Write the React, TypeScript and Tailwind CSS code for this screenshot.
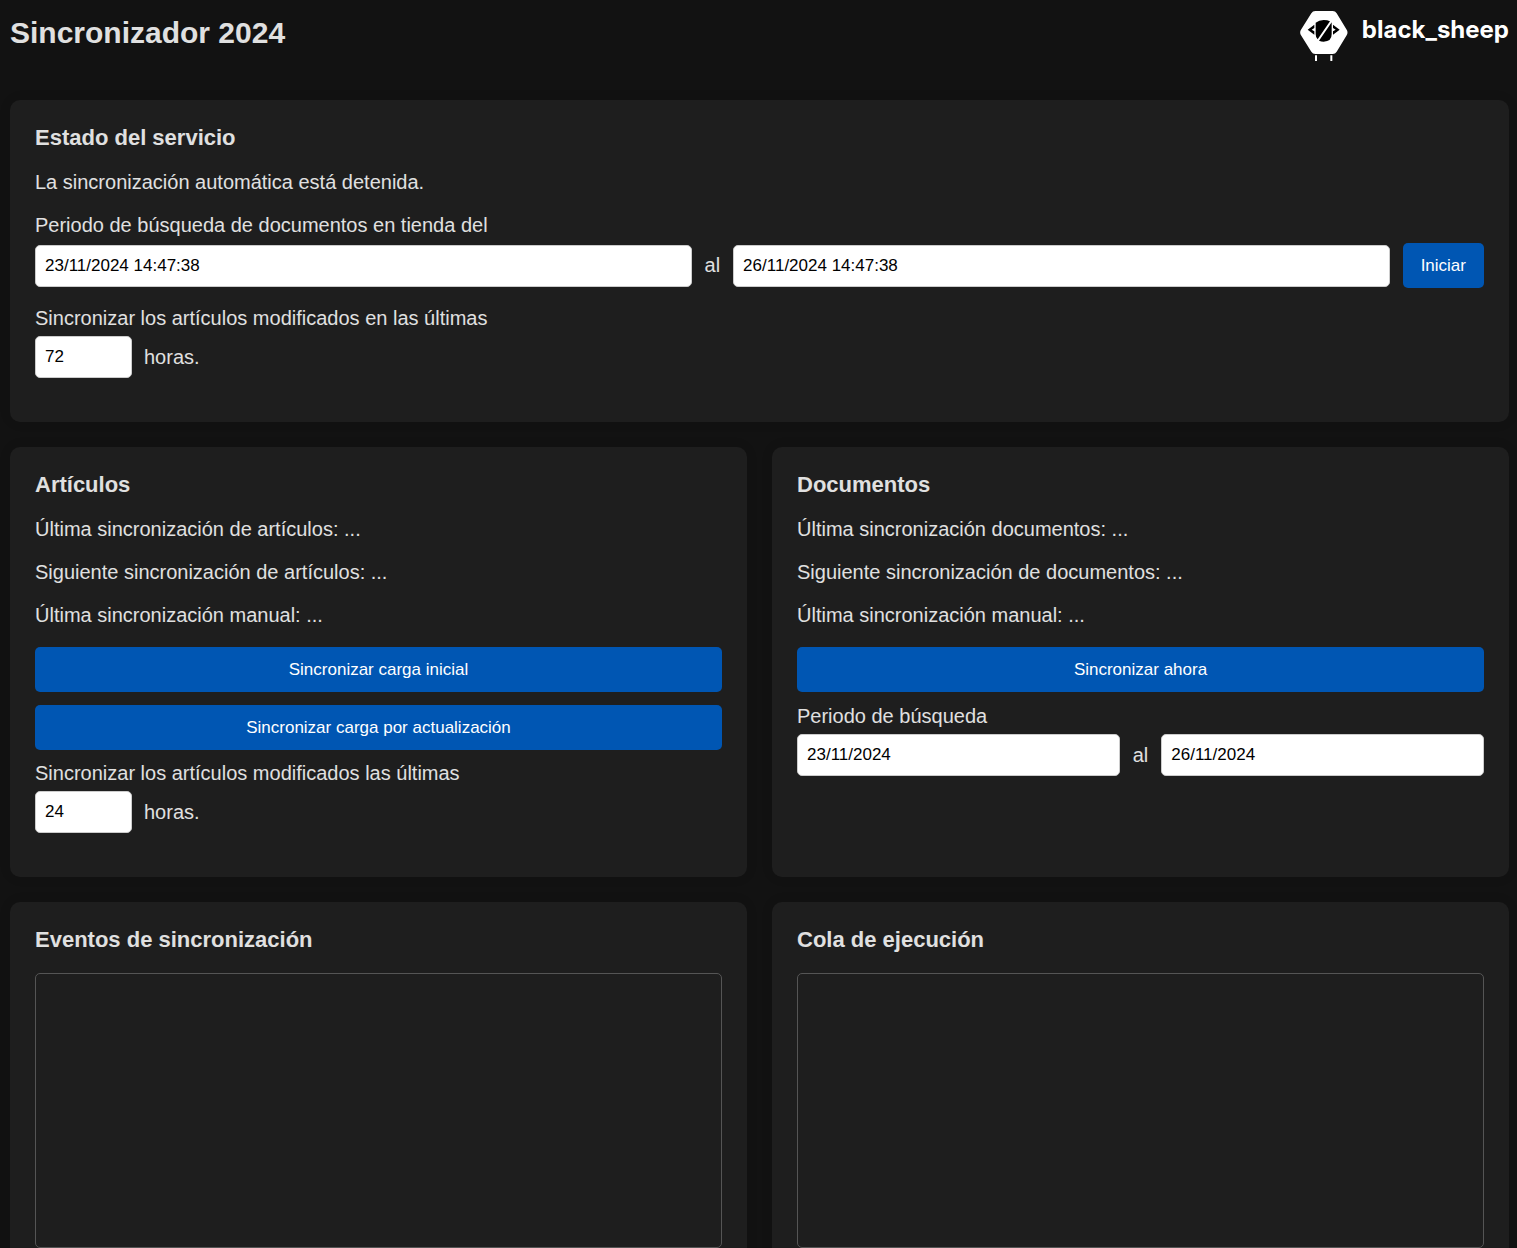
import { FC, InputHTMLAttributes, ReactNode, useState } from 'react';

const PAGE_TITLE = 'Sincronizador 2024';

const Logo: FC = () => (
  <a
    href="#"
    aria-label="black_sheep"
    className="flex items-start gap-3.5 text-white"
  >
    <svg viewBox="0 0 144 150" className="h-[50px] w-12" aria-hidden="true">
      <path
        fill="#fff"
        d="M46 0H98Q106 0 110 7L140 56Q145 64 140 73L110 122Q106 129 98 129H46Q38 129 34 122L3 73Q-2 64 3 56L34 7Q38 0 46 0Z"
      />
      <path fill="#fff" d="M45 133h6v17h-6zM91 133h6v17h-6z" />
      <path
        fill="#000"
        d="M47 35Q57 27 71 27Q82 27 90 31L53 85Q47 80 47 70ZM95 34V70Q95 92 71 92Q64 92 57 89Z"
      />
      <path
        fill="#000"
        fillRule="evenodd"
        d="M43 41V51L35 56L43 61V71L23 56ZM99 41V51L107 56L99 61V71L119 56Z"
      />
    </svg>
    <span className="mt-1 font-['Inter',sans-serif] text-2xl leading-[30px] font-bold">
      black_sheep
    </span>
  </a>
);

interface CardProps {
  title: string;
  children: ReactNode;
  className?: string;
}

const Card: FC<CardProps> = ({ title, children, className = '' }) => (
  <section
    className={`rounded-[10px] bg-[#1e1e1e] p-[25px] shadow-[0_0_12px_rgba(0,0,0,0.1)] ${className}`}
  >
    <h2 className="mb-5 text-[22px] leading-[26px] font-bold">{title}</h2>
    {children}
  </section>
);

const TextInput: FC<InputHTMLAttributes<HTMLInputElement>> = ({
  className = '',
  ...props
}) => (
  <input
    type="text"
    className={`h-[42px] min-w-0 rounded-[5px] border border-[#ccc] bg-white px-[9px] text-[17px] text-black ${className}`}
    {...props}
  />
);

interface ButtonProps {
  children: ReactNode;
  className?: string;
  onClick?: () => void;
}

const Button: FC<ButtonProps> = ({ children, className = '', onClick }) => (
  <button
    type="button"
    onClick={onClick}
    className={`h-[45px] cursor-pointer rounded-[5px] bg-[#0056b3] px-[18px] text-[17px] text-white hover:bg-[#004494] ${className}`}
  >
    {children}
  </button>
);

interface HoursFieldProps {
  id: string;
  label: string;
  initial: string;
}

const HoursField: FC<HoursFieldProps> = ({ id, label, initial }) => {
  const [hours, setHours] = useState<string>(initial);

  return (
    <div className="mb-[19px]">
      <label htmlFor={id} className="mb-1.5 block">
        {label}
      </label>
      <div className="flex items-center gap-3">
        <TextInput
          id={id}
          className="w-[97px]"
          value={hours}
          onChange={(event) => setHours(event.target.value)}
        />
        <span>horas.</span>
      </div>
    </div>
  );
};

interface PeriodFieldProps {
  id: string;
  label: string;
  from: string;
  to: string;
  children?: ReactNode;
}

const PeriodField: FC<PeriodFieldProps> = ({
  id,
  label,
  from,
  to,
  children,
}) => {
  const [start, setStart] = useState<string>(from);
  const [end, setEnd] = useState<string>(to);

  return (
    <div className="mb-[19px]">
      <label htmlFor={`${id}-from`} className="mb-1.5 block">
        {label}
      </label>
      <div className="flex items-center gap-[13px]">
        <TextInput
          id={`${id}-from`}
          className="flex-1"
          value={start}
          onChange={(event) => setStart(event.target.value)}
        />
        <label htmlFor={`${id}-to`}>al</label>
        <TextInput
          id={`${id}-to`}
          className="flex-1"
          value={end}
          onChange={(event) => setEnd(event.target.value)}
        />
        {children}
      </div>
    </div>
  );
};

const App: FC = () => {
  return (
    <div className="min-h-screen bg-[#121212] px-2 pt-2.5 pl-2.5 font-['Liberation_Sans',Arial,sans-serif] text-xl leading-[23px] text-[#e0e0e0]">
      <header className="mb-[39px] flex items-start justify-between pt-px">
        <h1 className="mt-1 text-3xl leading-9 font-bold">{PAGE_TITLE}</h1>
        <Logo />
      </header>

      <main className="grid grid-cols-2 gap-[25px]">
        <Card title="Estado del servicio" className="col-span-2">
          <p className="mb-5">La sincronización automática está detenida.</p>
          <PeriodField
            id="service-period"
            label="Periodo de búsqueda de documentos en tienda del"
            from="23/11/2024 14:47:38"
            to="26/11/2024 14:47:38"
          >
            <Button>Iniciar</Button>
          </PeriodField>
          <HoursField
            id="service-hours"
            label="Sincronizar los artículos modificados en las últimas"
            initial="72"
          />
        </Card>

        <Card title="Artículos">
          <p className="mb-5">Última sincronización de artículos: ...</p>
          <p className="mb-5">Siguiente sincronización de artículos: ...</p>
          <p className="mb-5">Última sincronización manual: ...</p>
          <Button className="mb-[13px] w-full">Sincronizar carga inicial</Button>
          <Button className="mb-3 w-full">
            Sincronizar carga por actualización
          </Button>
          <HoursField
            id="items-hours"
            label="Sincronizar los artículos modificados las últimas"
            initial="24"
          />
        </Card>

        <Card title="Documentos">
          <p className="mb-5">Última sincronización documentos: ...</p>
          <p className="mb-5">Siguiente sincronización de documentos: ...</p>
          <p className="mb-5">Última sincronización manual: ...</p>
          <Button className="mb-[13px] w-full">Sincronizar ahora</Button>
          <PeriodField
            id="documents-period"
            label="Periodo de búsqueda"
            from="23/11/2024"
            to="26/11/2024"
          />
        </Card>

        <Card title="Eventos de sincronización">
          <div className="h-[275px] overflow-y-auto rounded-[5px] border border-[#555]" />
        </Card>

        <Card title="Cola de ejecución">
          <div className="h-[275px] overflow-y-auto rounded-[5px] border border-[#555]" />
        </Card>
      </main>
    </div>
  );
};

export default App;
